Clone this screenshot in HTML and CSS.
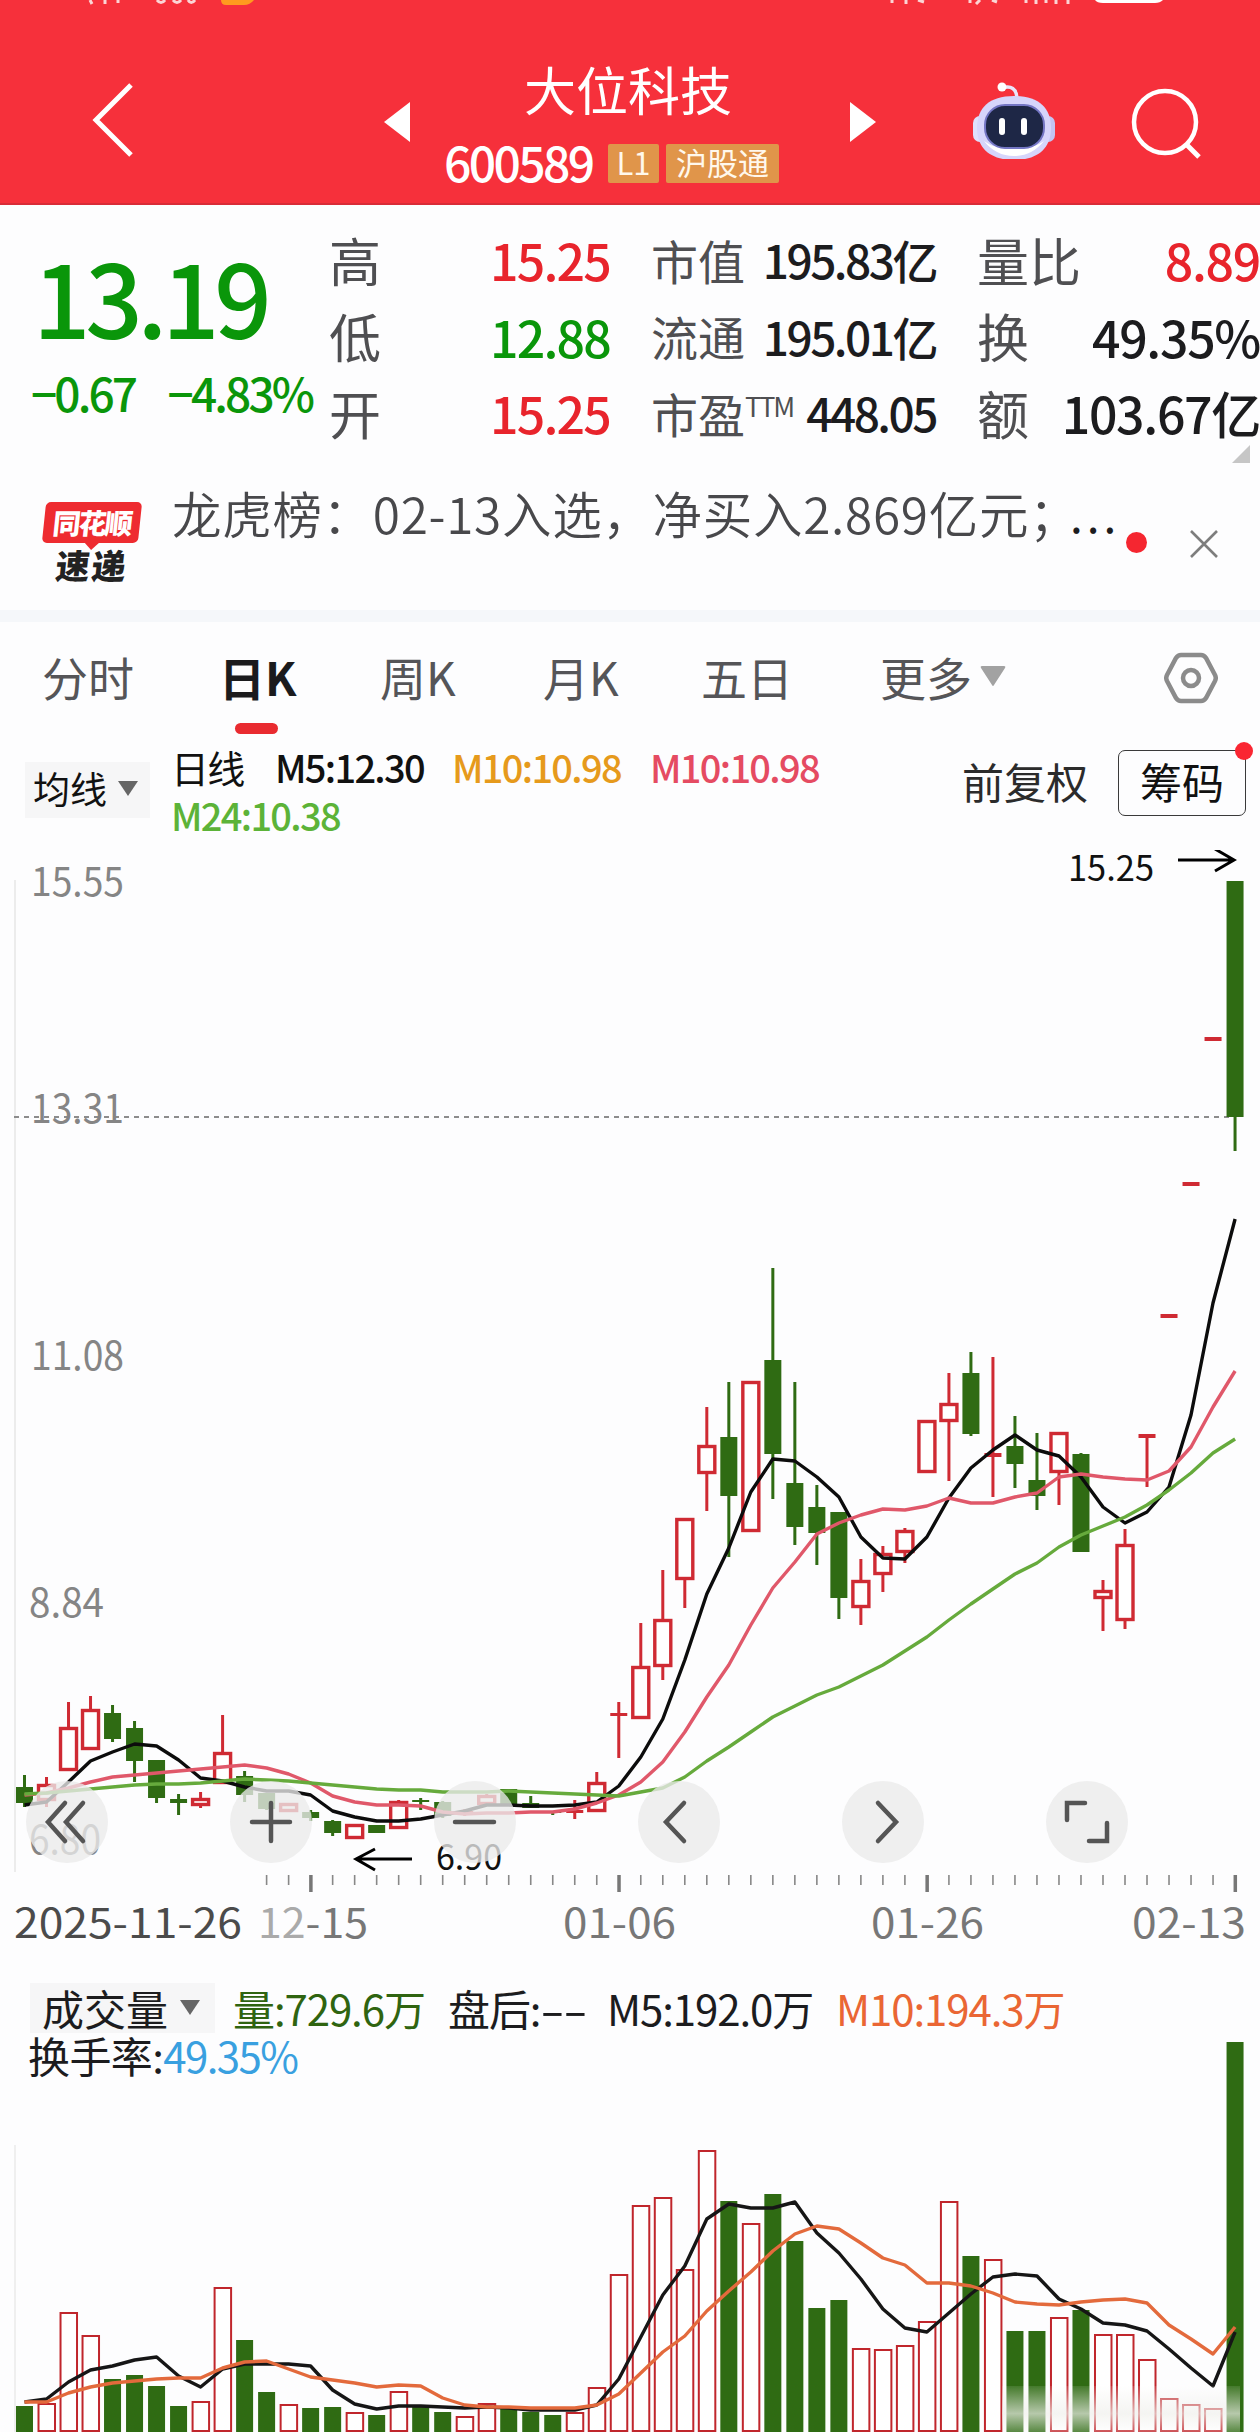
FILE: index.html
```html
<!DOCTYPE html>
<html lang="zh-CN">
<head>
    <meta charset="UTF-8">
    <meta name="viewport" content="width=device-width, initial-scale=1.0">
    <title>大位科技 600589</title>
    <link rel="stylesheet" href="styles.css">
</head>
<body>
    <header class="header">
        <svg class="status" width="1260" height="5" viewBox="0 0 1260 5">
            <path d="M90 0l2 4M105 0v4M118 0v3M157 0q4 5 8 0M173 0q4 5 8 0M188 0q3 5 7 0M892 0v3M906 0v4M918 0l6 2M970 0v3M980 0l-4 4M992 0l5 2M1026 0v3M1036 0v4M1046 0v3M1056 0v4M1068 0v4" stroke="#fbd5d5" stroke-width="3" fill="none"/>
            <path d="M221 0h33q-4 5-10 5h-18q-5 0-5-5z" fill="#ff9a1f"/>
            <path d="M1095 0h68q-3 3-8 3h-52q-6 0-8-3z" fill="#fff"/>
        </svg>
        <div class="nav">
            <svg class="back" width="44" height="76" viewBox="0 0 44 76"><path d="M40 3L5 38l35 35" fill="none" stroke="#fff" stroke-width="5"/></svg>
            <svg class="prev" width="26" height="40" viewBox="0 0 26 40"><path d="M26 0v40L0 20z" fill="#fff"/></svg>
            <div class="stock">
                <h1>大位科技</h1>
                <div class="code_row">
                    <span class="code">600589</span>
                    <span class="badge">L1</span>
                    <span class="badge wide">沪股通</span>
                </div>
            </div>
            <svg class="next" width="26" height="40" viewBox="0 0 26 40"><path d="M0 0v40l26-20z" fill="#fff"/></svg>
            <svg class="robot" width="84" height="78" viewBox="0 0 84 78">
                <path d="M30 7q14-4 15 10" fill="none" stroke="#e9e6fb" stroke-width="3.5"/>
                <circle cx="30" cy="6" r="4.5" fill="#fff"/>
                <rect x="1" y="35" width="14" height="26" rx="7" fill="#dfe0fb"/>
                <rect x="69" y="35" width="14" height="26" rx="7" fill="#c3c4f3"/>
                <path d="M42 15c25 0 37 12 37 32S66 79 42 79 5 67 5 47s12-32 37-32z" fill="#d6d5fb"/>
                <path d="M12 60q12 15 30 15t30-15q-10 8-30 8t-30-8z" fill="#fff"/>
                <rect x="13" y="24" width="59" height="43" rx="20" fill="#1e2746" stroke="#7476c4" stroke-width="2"/>
                <rect x="27" y="37" width="6" height="17" rx="3" fill="#fff"/>
                <rect x="49" y="37" width="6" height="17" rx="3" fill="#fff"/>
            </svg>
            <svg class="search" width="72" height="74" viewBox="0 0 72 74"><circle cx="34" cy="35" r="31" fill="none" stroke="#fff" stroke-width="4.5"/><path d="M55 57l13 13" stroke="#fff" stroke-width="5"/></svg>
        </div>
    </header>

    <section class="quote">
        <div class="price">
            <div class="last">13.19</div>
            <div class="change"><span>−0.67</span><span>−4.83%</span></div>
        </div>
        <dl class="col col_a">
            <dt>高</dt><dd class="red">15.25</dd>
            <dt>低</dt><dd class="green">12.88</dd>
            <dt>开</dt><dd class="red">15.25</dd>
        </dl>
        <dl class="col col_b">
            <dt>市值</dt><dd>195.83亿</dd>
            <dt>流通</dt><dd>195.01亿</dd>
            <dt>市盈<sup>TTM</sup></dt><dd>448.05</dd>
        </dl>
        <dl class="col col_c">
            <dt>量比</dt><dd class="red">8.89</dd>
            <dt>换</dt><dd>49.35%</dd>
            <dt>额</dt><dd>103.67亿</dd>
        </dl>
        <svg class="corner" width="18" height="18" viewBox="0 0 18 18"><path d="M18 0v18H0z" fill="#c6c6c6"/></svg>
    </section>

    <section class="news">
        <div class="news_logo">
            <span class="bubble"><i>同花顺</i></span>
            <span class="express">速递</span>
        </div>
        <p>龙虎榜：02-13入选，净买入2.869亿元；</p>
        <span class="dots">...</span>
        <span class="dot"></span>
        <svg width="28" height="28" viewBox="0 0 28 28"><path d="M1 1l26 26M27 1L1 27" stroke="#7d7d7d" stroke-width="2.6"/></svg>
    </section>

    <nav class="tabs">
        <span>分时</span>
        <span class="active">日K</span>
        <span>周K</span>
        <span>月K</span>
        <span>五日</span>
        <span class="more">更多<svg width="26" height="22" viewBox="0 0 26 22"><path d="M2 1h22q2 0 1 2L14 20q-1 2-2 0L1 3q-1-2 1-2z" fill="#a2a2a2"/></svg></span>
        <svg class="gear" width="54" height="52" viewBox="0 0 54 52">
            <path d="M17 3h20q3 0 5 3l9 17q1.500 3 0 6l-9 17q-2 3-5 3H17q-3 0-5-3L3 29q-1.500-3 0-6l9-17q2-3 5-3z" fill="none" stroke="#8b8b8b" stroke-width="4.5"/>
            <circle cx="27" cy="26" r="8" fill="none" stroke="#8b8b8b" stroke-width="4.5"/>
        </svg>
    </nav>

    <section class="ma">
        <div class="picker">均线<svg width="20" height="15" viewBox="0 0 20 15"><path d="M0 0h20L10 15z" fill="#666"/></svg></div>
        <div class="ma_list">
            <span class="name">日线</span><span class="m5">M5:12.30</span><span class="m10">M10:10.98</span><span class="m10b">M10:10.98</span>
            <span class="m24">M24:10.38</span>
        </div>
        <span class="adjust">前复权</span>
        <span class="chips">筹码</span>
    </section>

    <section class="chart">
        <svg id="kline" width="1260" height="1110" viewBox="0 850 1260 1110"></svg>
        <div class="tools">
            <button><svg viewBox="0 0 82 82"><path d="M39 22L22 41l17 19M57 22L40 41l17 19"/></svg></button>
            <button><svg viewBox="0 0 82 82"><path d="M22 41h38M41 22v38"/></svg></button>
            <button><svg viewBox="0 0 82 82"><path d="M21 41h39"/></svg></button>
            <button><svg viewBox="0 0 82 82"><path d="M46 22L28 41l18 19"/></svg></button>
            <button><svg viewBox="0 0 82 82"><path d="M36 22l18 19-18 19"/></svg></button>
            <button><svg viewBox="0 0 82 82"><path d="M21 39V22h18M43 60h18V42"/></svg></button>
        </div>
    </section>

    <section class="volume">
        <svg id="vol" width="1260" height="472" viewBox="0 1960 1260 472"></svg>
        <div class="vol_head">
            <div class="vol_row">
                <span class="vol_pick">成交量<svg width="20" height="15" viewBox="0 0 20 15"><path d="M0 0h20L10 15z" fill="#666"/></svg></span>
                <span class="v1">量:729.6万</span>
                <span class="v2">盘后:<b>--</b></span>
                <span class="v3">M5:192.0万</span>
                <span class="v4">M10:194.3万</span>
            </div>
            <div class="vol_row second">换手率:<span class="v5">49.35%</span></div>
        </div>
        <div class="haze"></div>
    </section>

    <script src="script.js"></script>
</body>
</html>
```
FILE: styles.css
```css
*, *:after, *:before {
    box-sizing: border-box;
}

body {
    margin: 0;
    width: 1260px;
    height: 2432px;
    overflow: hidden;
    background: #fdfdfe;
    color: #1c1c1e;
    font-family: "Noto Sans CJK SC", sans-serif;
    white-space: nowrap;
}

svg {
    display: block;
    flex: none;
}

h1, p, dl, dt, dd {
    margin: 0;
    font-weight: 400;
}

.red { color: #e8242c; }
.green { color: #0a960a; }

/* header */
.header {
    height: 205px;
    background: #f6303b;
    border-bottom: 2px solid #d92c38;
    color: #fff;
}

.nav {
    display: flex;
    align-items: flex-start;
    padding-left: 91px;
}

.back { margin-top: 77px; }
.prev { margin: 97px 0 0 249px; }

.stock {
    width: 440px;
    height: 190px;
    padding-top: 50px;
}

.stock h1 {
    padding-right: 4px;
    font-size: 52px;
    line-height: 68px;
    text-align: center;
}

.code_row {
    display: flex;
    align-items: center;
    height: 40px;
    margin-top: 20px;
    padding-left: 34px;
}

.code {
    width: 164px;
    margin-top: -5px;
    font-size: 48px;
    font-weight: 500;
    letter-spacing: -2.600px;
}

.badge {
    width: 51px;
    height: 39px;
    margin-right: 7px;
    border-radius: 2px;
    background: #e0954a;
    color: #fff8ec;
    font-size: 31px;
    line-height: 35px;
    text-align: center;
}

.badge.wide { width: 113px; }
.next { margin-top: 97px; }
.robot { margin: 76px 0 0 96px; }
.search { margin: 82px 0 0 75px; }

/* quote */
.quote {
    position: relative;
    display: flex;
    height: 275px;
    padding-top: 16px;
}

.price {
    width: 329px;
    color: #0a960a;
}

.last {
    height: 138px;
    padding-left: 33px;
    font-size: 101px;
    font-weight: 500;
    line-height: 148px;
    letter-spacing: -5.400px;
}

.change {
    display: flex;
    justify-content: space-between;
    padding: 0 17px 0 31px;
    font-size: 46px;
    font-weight: 500;
    line-height: 66px;
    letter-spacing: -2.900px;
}

.col {
    display: grid;
    grid-template-columns: 52px 1fr;
    grid-auto-rows: 76.500px;
    align-items: center;
    color: #1c1c1e;
}

.col dt {
    font-size: 52px;
    color: #4f4f52;
}

.col dd {
    text-align: right;
    font-size: 50px;
    font-weight: 500;
    letter-spacing: -1.800px;
}

.col .red { color: #e8242c; }
.col .green { color: #0a960a; }
.col_a { width: 281px; }

.col_b {
    width: 285px;
    margin-left: 41px;
}

.col_b dt { font-size: 47px; }
.col_b dd {
    font-size: 46px;
    letter-spacing: -2.500px;
}

.col_b sup {
    font-size: 27px;
    line-height: 0;
    letter-spacing: -2px;
    vertical-align: 16px;
}

.col_c {
    width: 283px;
    margin-left: 41px;
}

.col_c dd { letter-spacing: -1.300px; }

.corner {
    position: absolute;
    right: 10px;
    bottom: 17px;
}

/* news */
.news {
    display: flex;
    height: 130px;
    padding-left: 44px;
}

.news_logo {
    width: 128px;
    padding-top: 22px;
}

.bubble {
    position: relative;
    display: block;
    width: 96px;
    height: 41px;
    border-radius: 5px;
    background: #ee2b30;
    transform: skewX(-6deg);
    color: #fff;
    font-size: 28px;
    font-weight: 900;
    line-height: 40px;
    text-align: center;
    letter-spacing: -2px;
}

.bubble:after {
    content: "";
    position: absolute;
    left: 42px;
    top: 40px;
    border: 8px solid transparent;
    border-top-color: #ee2b30;
    border-bottom: 0;
}

.bubble i { font-style: normal; }

.express {
    display: block;
    padding-left: 12px;
    margin-top: 3px;
    font-size: 34px;
    font-weight: 900;
    line-height: 38px;
    letter-spacing: 2px;
    transform: skewX(-6deg);
    color: #222;
}

.news p {
    width: 898px;
    font-size: 49.500px;
    font-weight: 350;
    line-height: 66px;
    letter-spacing: 0.700px;
    color: #48484b;
}

.dots {
    width: 50px;
    font-size: 46px;
    line-height: 66px;
    letter-spacing: 4px;
}

.dot {
    width: 21px;
    height: 21px;
    margin: 52px 43px 0 6px;
    border-radius: 50%;
    background: #f52630;
}

.news svg { margin-top: 50px; }

/* period tabs */
.tabs {
    display: flex;
    height: 140px;
    padding: 23px 0 0 42px;
    border-top: 12px solid #f5f7fa;
    font-size: 46px;
    line-height: 62px;
    color: #555558;
}

.tabs span { width: 163px; }

.tabs .active {
    position: relative;
    padding-left: 14px;
    margin-right: 12px;
    font-weight: 700;
    color: #1b1b1d;
}

.tabs .active:after {
    content: "";
    position: absolute;
    left: 30px;
    top: 78px;
    width: 43px;
    height: 11px;
    border-radius: 6px;
    background: #e92b30;
}

.tabs span:nth-child(4) { width: 158px; }
.tabs span:nth-child(5) { width: 179px; }

.tabs .more {
    display: flex;
    align-items: center;
    gap: 8px;
    width: 284px;
    height: 62px;
}

.gear { margin-top: 7px; }

/* moving averages */
.ma {
    display: flex;
    height: 100px;
    padding-left: 25px;
    color: #111;
}

.picker {
    display: flex;
    align-items: center;
    gap: 11px;
    width: 125px;
    height: 56px;
    margin-top: 12px;
    padding: 0 0 4px 8px;
    background: #f6f6f7;
    font-size: 37px;
}

.ma_list {
    display: flex;
    flex-wrap: wrap;
    align-content: flex-start;
    width: 790px;
    margin-top: -7px;
    padding-left: 21px;
    font-size: 38px;
    line-height: 48px;
    letter-spacing: -1.700px;
}

.name { width: 104px; font-size: 38px; }
.m5 { width: 177px; font-weight: 500; }
.m10 { width: 198px; font-weight: 500; color: #e69a1c; }
.m10b { width: 250px; font-weight: 500; color: #e54b62; }
.m24 { font-weight: 500; color: #5cb338; }

.adjust {
    width: 178px;
    padding-left: 22px;
    font-size: 42px;
    line-height: 62px;
    color: #2b2b2b;
}

.chips {
    position: relative;
    width: 128px;
    height: 66px;
    border: 1.500px solid #3a3a3a;
    border-radius: 7px;
    font-size: 42px;
    line-height: 60px;
    text-align: center;
}

.chips:after {
    content: "";
    position: absolute;
    right: -8px;
    top: -9px;
    width: 18px;
    height: 18px;
    border-radius: 50%;
    background: #fa2632;
}

/* k-line */
.chart {
    position: relative;
    height: 1110px;
}

.tools {
    position: absolute;
    left: 26px;
    top: 931px;
    display: flex;
    gap: 122px;
}

.tools button {
    width: 82px;
    height: 82px;
    padding: 0;
    border: 0;
    border-radius: 50%;
    background: rgba(234, 235, 235, 0.78);
}

.tools path {
    fill: none;
    stroke: #555;
    stroke-width: 4.500;
    stroke-linecap: round;
}

.axis { font-size: 40px; fill: #858585; }
.dates { font-size: 41px; fill: #777; }
.note { font-size: 35px; fill: #111; }

/* volume */
.volume {
    position: relative;
    display: grid;
    height: 472px;
}

.volume > svg, .vol_head { grid-area: 1 / 1; }

.vol_head {
    padding-top: 24px;
    font-size: 42px;
    color: #1c1c1e;
}

.vol_row {
    display: flex;
    align-items: center;
    height: 47px;
    padding-left: 30px;
    letter-spacing: -1.100px;
}

.vol_row.second {
    padding-left: 28px;
    letter-spacing: -0.600px;
}

.vol_row .v5 {
    letter-spacing: -1.600px;
}

.vol_pick {
    display: flex;
    align-items: center;
    gap: 12px;
    width: 185px;
    height: 50px;
    padding-left: 12px;
    margin-right: 18px;
    background: #f6f6f7;
    letter-spacing: 0;
}

.v1 { width: 215px; color: #2f6410; }
.v2 { width: 159px; }
.v2 b {
    display: inline-block;
    font-weight: 400;
    transform: scaleX(1.700);
    transform-origin: left;
}
.v3 { width: 229px; }
.v4 { color: #ea6634; }
.v5 { color: #39a0e0; }

.haze {
    position: absolute;
    left: 1002px;
    top: 426px;
    width: 238px;
    height: 46px;
    background: linear-gradient(rgba(255, 255, 255, 0.1), rgba(240, 240, 236, 0.7) 60%, rgba(255, 255, 255, 0.2));
}
```
FILE: script.js
```js
var RED = "#cf2a33", GREEN = "#2f6b13";

function x(i) { return 24.5 + 22.01 * i; }

function line(points, color) {
    var p = points.map(function (y, i) { return x(i).toFixed(1) + "," + y; }).join(" ");
    return '<polyline points="' + p + '" fill="none" stroke="' + color + '" stroke-width="3.4" stroke-linejoin="round"/>';
}

function rect(x, y, w, h, fill, stroke, sw) {
    return '<rect x="' + x + '" y="' + y + '" width="' + w + '" height="' + h + '" fill="' + fill + '" stroke="' + (stroke || "none") + '" stroke-width="' + (sw || 0) + '"/>';
}

function text(cls, left, base, width, str, extra) {
    return '<text class="' + cls + '" x="' + left + '" y="' + base + '" textLength="' + width + '" lengthAdjust="spacingAndGlyphs" ' + (extra || "") + '>' + str + '</text>';
}

// [up/down, body top, body bottom, high, low]
var candles = [
    ["g",1787,1803,1775,1807],["r",1784,1801,1777,1807],["r",1727,1771,1702,1771],["r",1709,1750,1696,1750],
    ["g",1713,1739,1705,1742],["g",1728,1761,1721,1782],["g",1760,1798,1760,1803],["g",1799,1803,1794,1815],
    ["r",1798,1806,1792,1808],["r",1752,1784,1715,1784],["g",1776,1795,1771,1802],["g",1793,1809,1793,1810],
    ["r",1803,1812,1803,1812],["g",1812,1818,1810,1821],["g",1821,1833,1820,1836],["r",1824,1839,1824,1839],
    ["g",1825,1833,1825,1833],["r",1801,1829,1800,1829],["g",1800,1802,1798,1810],["g",1802,1816,1801,1818],
    ["r",1811,1814,1809,1816],["r",1795,1805,1794,1805],["g",1789,1806,1789,1806],["g",1803,1808,1796,1808],
    ["g",1811,1813,1811,1815],["r",1810,1813,1800,1819],["r",1782,1812,1772,1812],["r",1713,1716,1702,1758],
    ["r",1666,1719,1623,1719],["r",1619,1667,1570,1680],["r",1518,1580,1518,1608],["r",1445,1474,1407,1511],
    ["g",1437,1496,1382,1557],["r",1381,1532,1381,1532],["g",1360,1454,1268,1499],["g",1483,1527,1382,1545],
    ["g",1507,1533,1485,1565],["g",1512,1598,1512,1619],["r",1580,1608,1559,1625],["r",1553,1575,1546,1592],
    ["r",1530,1553,1528,1563],["r",1420,1473,1420,1473],["r",1403,1422,1373,1481],["g",1373,1434,1352,1436],
    ["r",1453,1457,1357,1497],["g",1446,1464,1416,1488],["g",1480,1496,1433,1510],["r",1432,1473,1432,1505],
    ["g",1454,1552,1453,1552],["r",1590,1599,1580,1631],["r",1544,1621,1529,1629],["r",1434,1438,1434,1487],
    ["r",1314,1318,1314,1318],["r",1182,1186,1182,1186],["r",1037,1041,1037,1041],["g",881,1117,881,1151]
];

var ma5 = [1805,1802,1782,1761,1752,1744,1746,1760,1778,1781,1787,1791,1791,1795,1811,1817,1821,1821,1819,1815,1811,1805,1805,1806,1806,1805,1802,1786,1757,1719,1660,1594,1548,1492,1459,1461,1477,1497,1537,1558,1559,1537,1498,1468,1450,1435,1450,1456,1477,1507,1523,1512,1487,1415,1303,1219];
var ma10 = [1795,1793,1788,1782,1777,1775,1773,1771,1769,1767,1765,1768,1774,1783,1796,1802,1805,1805,1806,1812,1814,1813,1813,1812,1812,1809,1803,1795,1782,1762,1732,1697,1665,1625,1588,1562,1534,1523,1515,1509,1510,1506,1498,1503,1503,1497,1493,1477,1474,1477,1479,1480,1471,1447,1407,1371];
var ma24 = [1794,1793,1791,1789,1787,1785,1784,1784,1783,1781,1779,1780,1781,1783,1785,1787,1789,1790,1790,1792,1792,1792,1791,1792,1793,1794,1795,1796,1792,1788,1777,1761,1747,1732,1717,1706,1695,1687,1676,1665,1651,1637,1620,1604,1589,1574,1563,1547,1535,1526,1517,1505,1490,1473,1453,1439];

var out = '<path d="M15 880V1872" stroke="#ececec" stroke-width="2"/>' +
    '<path d="M14 1117H1235" stroke="#8c8c8c" stroke-width="2" stroke-dasharray="5 5"/>';

out += text("axis", 31, 896, 93, "15.55") + text("axis", 31, 1123, 93, "13.31") +
    text("axis", 31, 1370, 93, "11.08") + text("axis", 29, 1617, 75, "8.84") + text("axis", 29, 1854, 72, "6.80");

candles.forEach(function (c, i) {
    var up = c[0] === "r", color = up ? RED : GREEN, cx = x(i), h = c[2] - c[1];
    out += rect(cx - 1.5, c[3], 3, Math.max(0, c[1] - c[3]), color);
    out += rect(cx - 1.5, c[2], 3, Math.max(0, c[4] - c[2]), color);
    if (up && h > 5) {
        out += rect(cx - 8, c[1] + 1.5, 16, h - 3, "#fff", color, 3.4);
    } else {
        out += rect(cx - 8.5, c[1], 17, h, color);
    }
});

out += line(ma5, "#0c0c0c") + line(ma10, "#e0586a") + line(ma24, "#66aa3c");

for (var i = 11; i < 56; i++) {
    var major = i === 13 || i === 27 || i === 41 || i === 55;
    out += rect(x(i) - (major ? 1.5 : 0.8), 1875, major ? 3.5 : 1.6, major ? 17 : 10, major ? "#777" : "#888");
}

out += text("note", 1068, 881, 86, "15.25") +
    '<path d="M1178 860H1234M1215 849L1234 860L1215 871" fill="none" stroke="#000" stroke-width="3"/>' +
    text("note", 436, 1870, 66, "6.90") +
    '<path d="M412 1859H356M375 1849L356 1859L375 1870" fill="none" stroke="#000" stroke-width="3"/>';

out += text("dates", 14, 1938, 228, "2025-11-26", 'style="fill:#4b4b4b"') +
    text("dates", 258, 1938, 110, '<tspan fill="#aaa">12</tspan>-15') +
    text("dates", 563, 1938, 113, "01-06") + text("dates", 871, 1938, 113, "01-26") + text("dates", 1132, 1938, 114, "02-13");

document.getElementById("kline").innerHTML = out;

// bar tops, the colour of the day is shared with the candles
var bars = [2406,2403,2312,2335,2379,2375,2386,2406,2401,2287,2340,2392,2404,2408,2407,2412,2415,2391,2407,2412,2416,2403,2409,2412,2415,2412,2387,2274,2205,2197,2269,2150,2201,2223,2194,2241,2308,2300,2348,2349,2345,2321,2201,2256,2259,2331,2331,2317,2310,2334,2334,2359,2398,2404,2408,2042];
var vol5 = [2402,2399,2382,2370,2366,2360,2357,2376,2387,2369,2364,2364,2364,2366,2390,2404,2409,2406,2406,2407,2408,2407,2408,2410,2410,2410,2405,2379,2337,2295,2266,2219,2204,2208,2208,2202,2233,2253,2279,2309,2328,2332,2313,2294,2277,2274,2276,2299,2309,2323,2325,2331,2349,2368,2386,2332];
var vol10 = [2402,2402,2393,2387,2383,2381,2379,2378,2378,2368,2362,2361,2369,2377,2380,2383,2387,2385,2386,2398,2405,2407,2407,2408,2408,2408,2405,2394,2373,2352,2336,2311,2291,2272,2251,2234,2226,2229,2243,2258,2265,2283,2283,2286,2293,2302,2304,2305,2302,2300,2299,2303,2325,2339,2354,2327];

var vol = '<path d="M15 2145V2432" stroke="#efefef" stroke-width="2"/>';
bars.forEach(function (top, i) {
    if (candles[i][0] === "r") {
        vol += rect(x(i) - 8, top + 1, 16.5, 2430 - top, "#fff", "#c0262c", 2);
    } else {
        vol += rect(x(i) - 8.5, top, 17, 2432 - top, GREEN);
    }
});
vol += line(vol5, "#161616") + line(vol10, "#e36a3c");
document.getElementById("vol").innerHTML = vol;
```
